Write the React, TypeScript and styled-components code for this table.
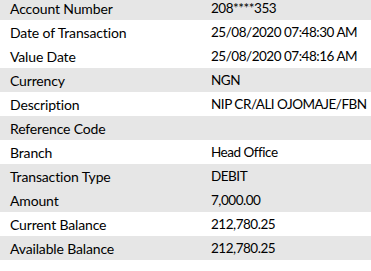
import styled, { createGlobalStyle } from "styled-components";

const GlobalStyle = createGlobalStyle`
  html, body {
    margin: 0;
    padding: 0;
    background: #ffffff;
  }
`;

const Sheet = styled.section`
  width: 371px;
  height: 271px;
  overflow: hidden;
  font-family: Lato, "Open Sans", sans-serif;
  font-size: 14px;
  color: #000;
`;

const List = styled.div`
  margin-top: -4px;
`;

const Row = styled.div<{ $shaded?: boolean }>`
  display: grid;
  grid-template-columns: 201px 1fr;
  height: 24px;
  align-items: center;
  background: ${(p) => (p.$shaded ? "#e6e6e6" : "#ffffff")};
`;

const Label = styled.span`
  padding-left: 10px;
  white-space: nowrap;
  letter-spacing: -0.15px;
`;

const Value = styled.span`
  padding-left: 10px;
  white-space: nowrap;
  font-size: 13.5px;
  letter-spacing: -0.48px;
`;

const rows: { label: string; value: string; shaded: boolean }[] = [
  { label: "Account Number", value: "208****353", shaded: true },
  { label: "Date of Transaction", value: "25/08/2020 07:48:30 AM", shaded: false },
  { label: "Value Date", value: "25/08/2020 07:48:16 AM", shaded: false },
  { label: "Currency", value: "NGN", shaded: true },
  { label: "Description", value: "NIP CR/ALI OJOMAJE/FBN", shaded: false },
  { label: "Reference Code", value: "", shaded: true },
  { label: "Branch", value: "Head Office", shaded: false },
  { label: "Transaction Type", value: "DEBIT", shaded: true },
  { label: "Amount", value: "7,000.00", shaded: true },
  { label: "Current Balance", value: "212,780.25", shaded: false },
  { label: "Available Balance", value: "212,780.25", shaded: true },
];

const App = () => {
  return (
    <>
      <GlobalStyle />
      <Sheet>
        <List>
          {rows.map((r) => (
            <Row key={r.label} $shaded={r.shaded}>
              <Label>{r.label}</Label>
              <Value>{r.value}</Value>
            </Row>
          ))}
        </List>
      </Sheet>
    </>
  );
};

export default App;
